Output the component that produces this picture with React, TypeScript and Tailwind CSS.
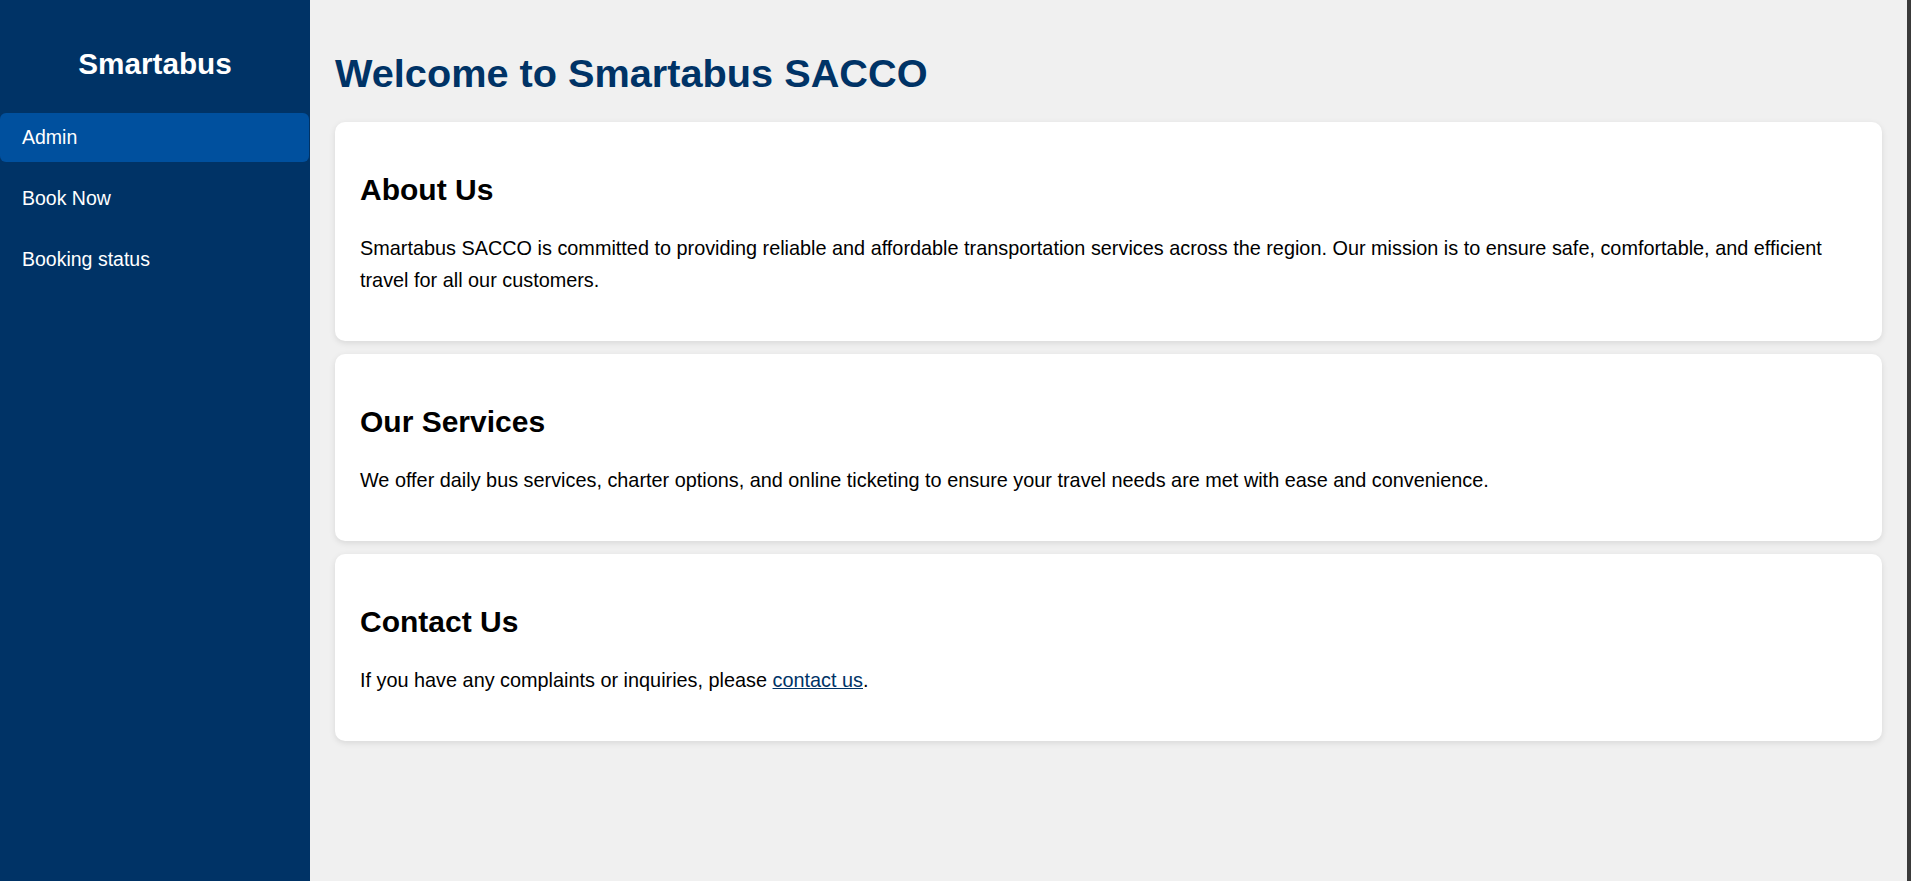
import React from "react";

const navItems = [
  { label: "Admin", active: true },
  { label: "Book Now", active: false },
  { label: "Booking status", active: false },
];

function Card({ title, children }: { title: string; children: React.ReactNode }) {
  return (
    <section className="bg-white rounded-[10px] shadow-[0_2px_6px_rgba(0,0,0,0.1)] px-[25px] py-[25px]">
      <h2 className="text-[30px] leading-[35px] font-bold text-black mt-[25px] mb-[25px]">{title}</h2>
      <p className="text-[19.85px] leading-[32px] text-black mb-[20px]">{children}</p>
    </section>
  );
}

export default function App() {
  return (
    <div
      className="flex min-h-screen h-screen w-full bg-[#f0f0f0]"
      style={{ fontFamily: '"Liberation Sans", Arial, sans-serif' }}
    >
      <aside className="w-[310px] shrink-0 bg-[#003366] text-white">
        <h2 className="mt-[46px] text-center text-[29.7px] leading-[35px] font-bold">Smartabus</h2>
        <nav className="mt-[32px] flex flex-col gap-[12px]">
          {navItems.map((item) => (
            <a
              key={item.label}
              href="#"
              className={
                item.active
                  ? "block w-[309px] h-[49px] rounded-[6px] bg-[#00509e] pl-[22px] text-[19.5px] leading-[49px] text-white"
                  : "block w-[309px] h-[49px] rounded-[6px] pl-[22px] text-[19.5px] leading-[49px] text-white"
              }
            >
              {item.label}
            </a>
          ))}
        </nav>
      </aside>

      <main className="flex-1 min-w-0 px-[25px] pt-[24px] rounded-tr-[6px]">
        <h1 className="text-[39.7px] leading-[45px] font-bold text-[#003366] mt-[27px] mb-[26px]">
          Welcome to Smartabus SACCO
        </h1>
        <div className="flex flex-col gap-[13px]">
          <Card title="About Us">
            Smartabus SACCO is committed to providing reliable and affordable transportation services across the
            region. Our mission is to ensure safe, comfortable, and efficient travel for all our customers.
          </Card>
          <Card title="Our Services">
            We offer daily bus services, charter options, and online ticketing to ensure your travel needs are met with
            ease and convenience.
          </Card>
          <Card title="Contact Us">
            If you have any complaints or inquiries, please{" "}
            <a href="#" className="text-[#003366] underline">
              contact us
            </a>
            .
          </Card>
        </div>
      </main>

      <div className="w-[4px] shrink-0 bg-[#3a3a3a]" />
    </div>
  );
}
